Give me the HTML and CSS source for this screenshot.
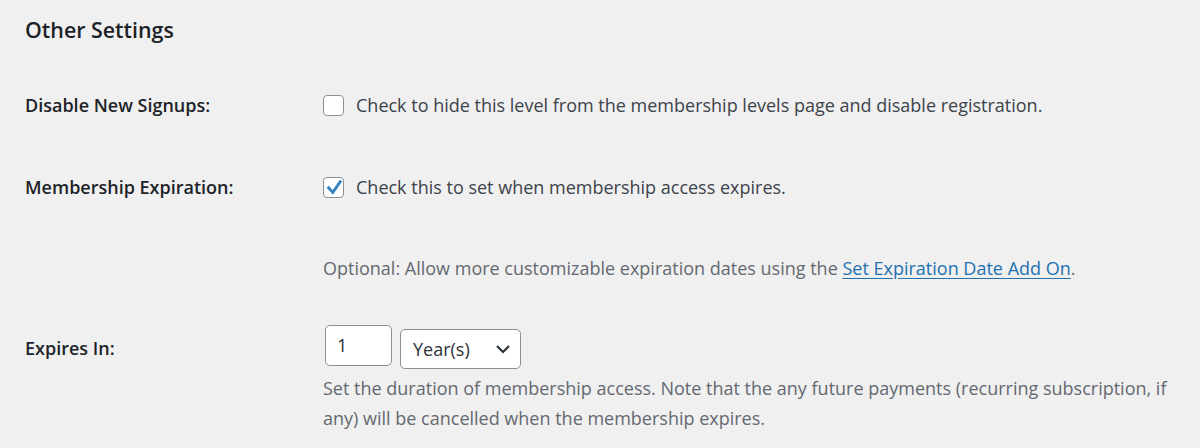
FILE: index.html
```html
<!DOCTYPE html>
<html lang="en">
<head>
<meta charset="utf-8">
<title>Other Settings</title>
<link rel="stylesheet" href="styles.css">
</head>
<body>
<main class="wrap">
  <h2 class="section-title">Other Settings</h2>
  <div class="form-table">
    <div class="row row-check">
      <div class="label">Disable New Signups:</div>
      <div class="field">
        <label class="check-line">
          <span class="checkbox"></span>
          <span>Check to hide this level from the membership levels page and disable registration.</span>
        </label>
      </div>
    </div>
    <div class="row row-check">
      <div class="label">Membership Expiration:</div>
      <div class="field">
        <label class="check-line">
          <span class="checkbox checked">
            <svg viewBox="0 0 21 21" width="21" height="21"><path d="M5.6 10.8 L9.8 15.4 L17.2 4.8" fill="none" stroke="#3582c4" stroke-width="2.8" stroke-linecap="square" stroke-linejoin="miter"/></svg>
          </span>
          <span>Check this to set when membership access expires.</span>
        </label>
      </div>
    </div>
    <div class="row row-note">
      <div class="label"></div>
      <div class="field">
        <p class="description">Optional: Allow more customizable expiration dates using the <a href="#">Set Expiration Date Add On</a>.</p>
      </div>
    </div>
    <div class="row row-expires">
      <div class="label">Expires In:</div>
      <div class="field">
        <div class="controls">
          <div class="text-input">1</div>
          <div class="select">
            <span>Year(s)</span>
            <svg viewBox="0 0 16 10" width="16" height="10"><path d="M2 2 L8 8 L14 2" fill="none" stroke="#2c3338" stroke-width="2.2"/></svg>
          </div>
        </div>
        <p class="description desc-wrap">Set the duration of membership access. Note that the any future payments (recurring subscription, if any) will be cancelled when the membership expires.</p>
      </div>
    </div>
  </div>
</main>
</body>
</html>
```
FILE: styles.css
```css
html, body {
  margin: 0;
  padding: 0;
  background: #f0f0f1;
}
body {
  font-family: "Open Sans", "Noto Sans", sans-serif;
  font-size: 18px;
  color: #3c434a;
}
.wrap {
  padding: 0 25px;
}
.section-title {
  margin: 15px 0 19px;
  font-size: 21.4px;
  line-height: 30px;
  font-weight: 600;
  color: #1d2327;
}
.row {
  display: grid;
  grid-template-columns: 298px 1fr;
}
.row-check {
  padding: 29px 0;
}
.row-note {
  padding: 28px 0;
}
.label {
  font-weight: 600;
  color: #1d2327;
  line-height: 24px;
}
.check-line {
  display: flex;
  align-items: center;
  gap: 12px;
  line-height: 24px;
}
.checkbox {
  box-sizing: border-box;
  width: 21px;
  height: 21px;
  border: 1px solid #8c8f94;
  border-radius: 4px;
  background: #fff;
  flex: none;
  position: relative;
}
.checkbox svg {
  position: absolute;
  left: -1px;
  top: -1px;
}
.description {
  margin: 0;
  color: #646970;
  line-height: 24px;
}
.description a {
  color: #2271b1;
  text-decoration: underline;
  text-underline-offset: 3px;
}
.row-expires {
  padding-top: 17px;
}
.row-expires .label {
  padding-top: 11px;
}
.controls {
  display: flex;
  align-items: flex-start;
  gap: 8px;
  margin-left: 2px;
}
.text-input {
  box-sizing: border-box;
  width: 67px;
  height: 41px;
  border: 1px solid #8c8f94;
  border-radius: 5px;
  background: #fff;
  color: #2c3338;
  padding: 0 11px;
  line-height: 39px;
}
.select {
  box-sizing: border-box;
  margin-top: 4px;
  width: 121px;
  height: 40px;
  border: 1px solid #8c8f94;
  border-radius: 5px;
  background: #fff;
  color: #2c3338;
  padding: 0 9px 0 12px;
  display: flex;
  align-items: center;
  justify-content: space-between;
}
.desc-wrap {
  margin-top: 4px;
  line-height: 30px;
}
```
